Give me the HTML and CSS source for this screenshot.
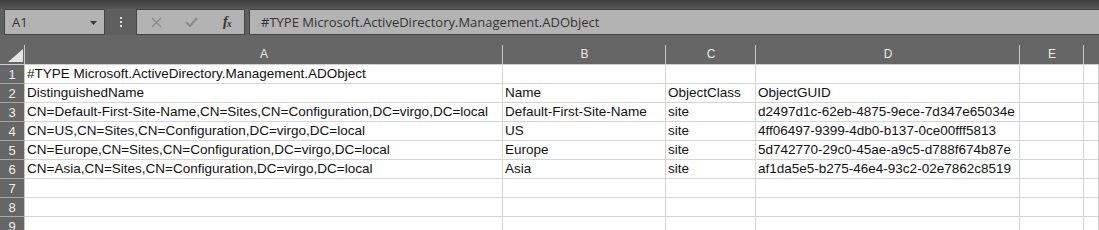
FILE: index.html
```html
<!DOCTYPE html>
<html>
<head>
<meta charset="utf-8">
<link rel="stylesheet" href="styles.css">
</head>
<body>
<div class="app">
  <div class="topstrip"></div>
  <div class="fbar">
    <div class="namebox"><span class="ref">A1</span><svg class="dd" width="7" height="4" viewBox="0 0 7 4"><path d="M0 0H7L3.5 4Z" fill="#3a3a3a"/></svg></div>
    <div class="vdots"><i></i><i></i><i></i></div>
    <div class="btns">
      <svg width="11" height="11" viewBox="0 0 11 11"><path d="M1 1L10 10M10 1L1 10" stroke="#8a8a8a" stroke-width="1.3"/></svg>
      <svg width="13" height="10" viewBox="0 0 13 10"><path d="M1 5L5 9L12 1" stroke="#8a8a8a" stroke-width="2" fill="none"/></svg>
      <span class="fx">f<sub>x</sub></span>
    </div>
    <div class="finput">#TYPE Microsoft.ActiveDirectory.Management.ADObject</div>
  </div>
  <div class="sheet">
    <div class="hc corner"><svg width="15" height="13" viewBox="0 0 15 13"><path d="M0 13H15V0Z" fill="#e4e4e4"/></svg></div>
    <div class="hc">A</div><div class="hc">B</div><div class="hc">C</div><div class="hc">D</div><div class="hc">E</div><div class="hc last"></div>

    <div class="rh">1</div><div class="c">#TYPE Microsoft.ActiveDirectory.Management.ADObject</div><div class="c"></div><div class="c"></div><div class="c"></div><div class="c"></div><div class="c"></div>
    <div class="rh">2</div><div class="c">DistinguishedName</div><div class="c">Name</div><div class="c">ObjectClass</div><div class="c">ObjectGUID</div><div class="c"></div><div class="c"></div>
    <div class="rh">3</div><div class="c">CN=Default-First-Site-Name,CN=Sites,CN=Configuration,DC=virgo,DC=local</div><div class="c">Default-First-Site-Name</div><div class="c">site</div><div class="c">d2497d1c-62eb-4875-9ece-7d347e65034e</div><div class="c"></div><div class="c"></div>
    <div class="rh">4</div><div class="c">CN=US,CN=Sites,CN=Configuration,DC=virgo,DC=local</div><div class="c">US</div><div class="c">site</div><div class="c">4ff06497-9399-4db0-b137-0ce00fff5813</div><div class="c"></div><div class="c"></div>
    <div class="rh">5</div><div class="c">CN=Europe,CN=Sites,CN=Configuration,DC=virgo,DC=local</div><div class="c">Europe</div><div class="c">site</div><div class="c">5d742770-29c0-45ae-a9c5-d788f674b87e</div><div class="c"></div><div class="c"></div>
    <div class="rh">6</div><div class="c">CN=Asia,CN=Sites,CN=Configuration,DC=virgo,DC=local</div><div class="c">Asia</div><div class="c">site</div><div class="c">af1da5e5-b275-46e4-93c2-02e7862c8519</div><div class="c"></div><div class="c"></div>
    <div class="rh">7</div><div class="c"></div><div class="c"></div><div class="c"></div><div class="c"></div><div class="c"></div><div class="c"></div>
    <div class="rh">8</div><div class="c"></div><div class="c"></div><div class="c"></div><div class="c"></div><div class="c"></div><div class="c"></div>
    <div class="rh">9</div><div class="c"></div><div class="c"></div><div class="c"></div><div class="c"></div><div class="c"></div><div class="c"></div>
  </div>
</div>
</body>
</html>
```

FILE: styles.css
```css
* { box-sizing: border-box; }
html, body { margin: 0; padding: 0; background: #5f5f5f; overflow: hidden; }
.app { width: 1099px; height: 230px; overflow: hidden; font-family: "Liberation Sans", Arial, sans-serif; }
.topstrip { height: 9px; background: linear-gradient(#3e3e3e, #575757); }
.fbar { height: 26px; display: flex; align-items: stretch; background: #5f5f5f; padding-left: 4px; }
.namebox { width: 101px; background: #b3b3b3; border: 1px solid #454545; display: flex; align-items: center; justify-content: space-between; padding: 0 7px 0 7px; }
.ref { font-family: "Open Sans", sans-serif; font-size: 13px; color: #333; }
.dd { margin-top: 1px; }
.vdots { width: 31px; display: flex; flex-direction: column; align-items: center; justify-content: center; gap: 2px; }
.vdots i { display: block; width: 2px; height: 2px; background: #e0e0e0; }
.btns { width: 109px; background: #b3b3b3; border: 1px solid #454545; display: flex; align-items: center; padding-left: 14px; gap: 23px; }
.fx { font-family: "Liberation Serif", serif; font-style: italic; font-weight: bold; font-size: 14px; color: #333; margin-left: 2px; letter-spacing: -1px; }
.fx sub { font-size: 10px; vertical-align: -1px; }
.finput { flex: 1; margin-left: 4px; background: #b3b3b3; border: 1px solid #454545; border-right: none; display: flex; align-items: center; padding-left: 11px; font-family: "Open Sans", sans-serif; font-size: 13px; color: #333; }
.sheet { display: grid; grid-template-columns: 25px 478px 163px 90px 264px 64px 1fr; grid-template-rows: 30px repeat(9, 19px); background: #fff; }
.hc { background: #666; color: #eaeaea; font-size: 12px; display: flex; align-items: center; justify-content: center; padding-top: 9px; position: relative; border-bottom: 1px solid #cfcfcf; }
.hc::after { content: ""; position: absolute; right: 0; top: 10px; bottom: 0; width: 1px; background: #c8c8c8; }
.hc.last::after { display: none; }
.corner { justify-content: flex-start; align-items: flex-end; padding: 0 0 2px 8px; }
.rh { background: #666; color: #eeeeee; font-size: 13px; display: flex; align-items: center; justify-content: center; border-bottom: 1px solid #a8a8a8; border-right: 1px solid #c8c8c8; padding-top: 1px; }
.c { border-right: 1px solid #d4d4d4; border-bottom: 1px solid #d4d4d4; font-size: 13.5px; color: #111; white-space: nowrap; overflow: hidden; padding: 0 0 0 2px; line-height: 17px; }
```
